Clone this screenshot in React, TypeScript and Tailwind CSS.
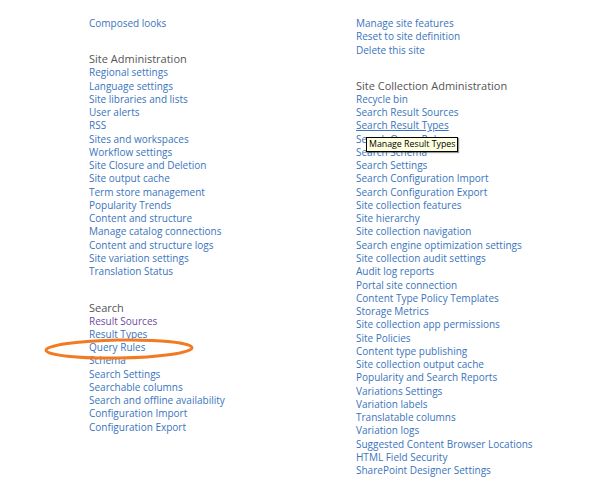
const adminLinks = [
  'Regional settings',
  'Language settings',
  'Site libraries and lists',
  'User alerts',
  'RSS',
  'Sites and workspaces',
  'Workflow settings',
  'Site Closure and Deletion',
  'Site output cache',
  'Term store management',
  'Popularity Trends',
  'Content and structure',
  'Manage catalog connections',
  'Content and structure logs',
  'Site variation settings',
  'Translation Status',
];

const searchLinks = [
  'Result Types',
  'Query Rules',
  'Schema',
  'Search Settings',
  'Searchable columns',
  'Search and offline availability',
  'Configuration Import',
  'Configuration Export',
];

const collectionLinks = [
  'Recycle bin',
  'Search Result Sources',
  'Search Result Types',
  'Search Query Rules',
  'Search Schema',
  'Search Settings',
  'Search Configuration Import',
  'Search Configuration Export',
  'Site collection features',
  'Site hierarchy',
  'Site collection navigation',
  'Search engine optimization settings',
  'Site collection audit settings',
  'Audit log reports',
  'Portal site connection',
  'Content Type Policy Templates',
  'Storage Metrics',
  'Site collection app permissions',
  'Site Policies',
  'Content type publishing',
  'Site collection output cache',
  'Popularity and Search Reports',
  'Variations Settings',
  'Variation labels',
  'Translatable columns',
  'Variation logs',
  'Suggested Content Browser Locations',
  'HTML Field Security',
  'SharePoint Designer Settings',
];

const Link = ({ text, visited, hover }: { text: string; visited?: boolean; hover?: boolean }) => (
  <a
    href="#"
    className={`block w-fit whitespace-nowrap ${visited ? 'text-[#6f4aa0]' : 'text-[#3a74bd]'} ${hover ? 'underline' : ''}`}
  >
    {text}
  </a>
);

const Heading = ({ text }: { text: string }) => (
  <h3 className="text-[#555] text-[11px] leading-[14px] font-normal">{text}</h3>
);

export default function App() {
  return (
    <div
      className="relative w-[600px] h-[499px] bg-white overflow-hidden text-[10px] leading-[13.27px]"
      style={{ fontFamily: '"Segoe UI", "Open Sans", sans-serif' }}
    >
      <div className="flex pl-[89px] pt-[17px]">
        {/* Left column */}
        <div className="w-[267px]">
          <Link text="Composed looks" />

          <div className="mt-[22px]">
            <Heading text="Site Administration" />
            {adminLinks.map((l) => (
              <Link key={l} text={l} />
            ))}
          </div>

          <div className="mt-[22px]">
            <Heading text="Search" />
            <Link text="Result Sources" visited />
            {searchLinks.map((l) => (
              <Link key={l} text={l} />
            ))}
          </div>
        </div>

        {/* Right column */}
        <div>
          <Link text="Manage site features" />
          <Link text="Reset to site definition" />
          <Link text="Delete this site" />

          <div className="relative mt-[22px]">
            <Heading text="Site Collection Administration" />
            {collectionLinks.map((l) => (
              <Link key={l} text={l} hover={l === 'Search Result Types'} />
            ))}

            {/* Tooltip */}
            <div className="absolute left-[10px] top-[58px] border border-black bg-[#ffffe1] px-[2px] text-[8.8px] leading-[13px] text-black whitespace-nowrap shadow-[1px_1px_1px_rgba(0,0,0,0.4)]">
              Manage Result Types
            </div>
          </div>
        </div>
      </div>

      {/* Highlight ellipse around Query Rules */}
      <svg className="absolute left-0 top-0 pointer-events-none" width="600" height="499">
        <ellipse cx="119" cy="349" rx="73" ry="9" fill="none" stroke="#f27a22" strokeWidth="3" transform="rotate(-1 119 349)" />
      </svg>
    </div>
  );
}
